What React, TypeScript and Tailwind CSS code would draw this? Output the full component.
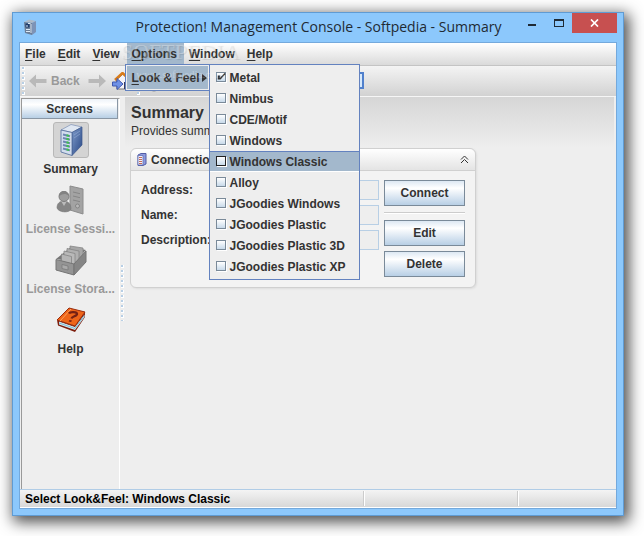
import * as React from "react";
import { useState } from "react";

// ─────────────────────────────────────────────
// Data
// ─────────────────────────────────────────────
const LOOKS = [
  "Metal",
  "Nimbus",
  "CDE/Motif",
  "Windows",
  "Windows Classic",
  "Alloy",
  "JGoodies Windows",
  "JGoodies Plastic",
  "JGoodies Plastic 3D",
  "JGoodies Plastic XP",
];

const FIELDS = ["Address:", "Name:", "Description:"];

// ─────────────────────────────────────────────
// Icons
// ─────────────────────────────────────────────
function TitleIcon() {
  return (
    <svg width="14" height="17" viewBox="0 0 14 17" aria-hidden="true">
      <path d="M1 3 6 0.5 13 2 9 4z" fill="#aebac8" />
      <path d="M1 3 9 4V16L2 14z" fill="#6c7f98" />
      <path d="M9 4 13 2V13L9 16z" fill="#7d93b6" />
      <path d="M2.5 4.500h4v4h-4z" fill="#1d3a6b" />
      <path d="M5 4.500h2.500M3 7h2M3 10.500h4M3 12.500h4M8 5v9" stroke="#dce8f5" strokeWidth="1" />
    </svg>
  );
}

function ServerIcon() {
  return (
    <svg width="26" height="34" viewBox="0 0 26 34" aria-hidden="true">
      <defs>
        <linearGradient id="side" x1="0" x2="1" y1="0" y2="1">
          <stop offset="0" stopColor="#7f9ccb" />
          <stop offset="1" stopColor="#284784" />
        </linearGradient>
      </defs>
      <path d="M3 7 13 1.500 24 4 14 9.500z" fill="#dfe7f2" stroke="#7b8fb4" strokeWidth=".7" />
      <path d="M14 9.500 24 4V22L14 32.500z" fill="url(#side)" stroke="#3a5489" strokeWidth=".7" />
      <path d="M3 7 14 9.500V32.500L3 29z" fill="#d3deee" stroke="#4f6999" strokeWidth=".8" />
      <path d="M5 11.500l7 1.700M5 15l7 1.700M5 18.500l7 1.700M5 22l7 1.700M5 25.500l7 1.900" stroke="#6d86b4" strokeWidth="2" />
      <path d="M8.500 12.300l2.500.6M8.500 15.800l2.500.6M8.500 19.300l2.500.6M8.500 22.800l2.500.6M8.500 26.400l2.500.6" stroke="#3fc04c" strokeWidth="2" />
      <path d="M16 12l6-4M16 15l6-4" stroke="#95add5" strokeWidth=".6" />
    </svg>
  );
}

function SessionsIcon() {
  return (
    <svg width="30" height="32" viewBox="0 0 30 32" aria-hidden="true">
      <path d="M14 2 27 5V30L14 26z" fill="#a3a3a3" stroke="#8c8c8c" />
      <path d="M17 8l7 1.700M17 12l7 1.700M17 16l7 1.700" stroke="#868686" />
      <circle cx="21.500" cy="22" r="2" fill="#b8b8b8" stroke="#858585" />
      <path d="M1 24c0-5 3-7 7-7s7 3 7 8c-1 4-12 4-14-1z" fill="#858585" stroke="#777" strokeWidth=".6" />
      <path d="M5 17l3 5 3-5z" fill="#bbb" />
      <circle cx="8" cy="12.500" r="5" fill="#9d9d9d" stroke="#7d7d7d" />
      <path d="M3 12c0-6 9-7 10 0-4-3-6-2-10 0z" fill="#828282" />
    </svg>
  );
}

function StorageIcon() {
  return (
    <svg width="34" height="32" viewBox="0 0 34 32" aria-hidden="true">
      <path d="M2 15 17 3 32 6 20 18z" fill="#777" />
      <path d="M16 2l13 2v13l-13-2z" fill="#a6a6a6" stroke="#858585" strokeWidth=".8" />
      <path d="M13 4.500l12 2.500v12l-12-3z" fill="#b0b0b0" stroke="#858585" strokeWidth=".8" />
      <path d="M10 7l11 2.500v12L10 18z" fill="#b9b9b9" stroke="#858585" strokeWidth=".8" />
      <path d="M7.500 10l10 2.500v10l-10-3z" fill="#b5b5b5" stroke="#858585" strokeWidth=".8" />
      <path d="M2 15.500 20 20V31L2 26z" fill="#949494" stroke="#757575" />
      <path d="M20 20 32 7V18L20 31z" fill="#858585" stroke="#757575" />
      <path d="M8 20.500l6 1.500v4l-6-1.500z" fill="#aaa" stroke="#777" strokeWidth=".7" />
    </svg>
  );
}

function HelpIcon() {
  return (
    <svg width="30" height="26" viewBox="0 0 30 26" aria-hidden="true">
      <path d="M1 13 19 19 29 5V10L19 25 2 18.500z" fill="#7d1d0c" />
      <path d="M3 14.500 19 20 28.500 7.500V10L19 23 3 17.500z" fill="#d3eaf3" />
      <path d="M3 16l16 5.500 9-12.500" fill="none" stroke="#69aeca" strokeWidth=".8" />
      <path d="M1 13 13 1 29 5 19 19z" fill="#ee651a" stroke="#9a2a0b" />
      <path d="M4 14 15 2" stroke="#ffa25c" />
      <path d="M13 6.500c1-2 8-2 8 .5s-5 2-5.500 4.500" fill="none" stroke="#762113" strokeWidth="2.300" />
      <path d="M13.500 13l2.500.6-.9 1.500-2.500-.6z" fill="#762113" />
    </svg>
  );
}

function SmallServerIcon() {
  return (
    <svg width="10" height="13" viewBox="0 0 10 13" aria-hidden="true">
      <path d="M1 2 4 .500h5V11L6 12.500H1z" fill="#8d9ade" stroke="#515ca5" />
      <path d="M1 2.500h5V12H1z" fill="#eef1fc" stroke="#6671b4" strokeWidth=".8" />
      <path d="M2 4.500h3M2 6.500h3M2 8.500h3M2 10.500h3" stroke="#c56a56" />
    </svg>
  );
}

function ArrowIcon({ forward }: { forward?: boolean }) {
  return (
    <svg width="18" height="14" viewBox="0 0 18 14" className={forward ? "rotate-180" : ""} aria-hidden="true">
      <path d="M0 7 7 .500V5H17.500V9H7V13.500z" fill="#b9b9b9" />
    </svg>
  );
}

function HomeIcon() {
  return (
    <svg width="18" height="18" viewBox="0 0 18 18" aria-hidden="true">
      <path d="M4.500 8 11 2l6 6v9H5z" fill="#f4f4f8" stroke="#777" />
      <path d="M3 8 10.500 1 18 8" fill="none" stroke="#d97b19" strokeWidth="2.500" />
      <path d="M12 10h3v7h-3z" fill="#3b3b5c" />
      <path d="M0.500 10H5V6.500l6 5.500-6 5.500V14H.500z" fill="#6f91e6" stroke="#3f58b0" />
    </svg>
  );
}

// ─────────────────────────────────────────────
// Small parts
// ─────────────────────────────────────────────
function Grip() {
  return (
    <span className="my-px w-[3px] self-stretch bg-[conic-gradient(from_0deg_at_2px_2px,transparent_75%,#b8cfe5_0),conic-gradient(from_0deg_at_3px_3px,transparent_75%,#fff_0)] bg-[length:3px_5px]" />
  );
}

function MenuTitle({ text, active }: { text: string; active?: boolean }) {
  return (
    <button className={`h-full pr-[7px] pl-[5px] ${active ? "bg-[#a3b8cc]" : ""}`}>
      <Mnemonic text={text} />
    </button>
  );
}

function Mnemonic({ text }: { text: string }) {
  return (
    <>
      <span className="underline underline-offset-2">{text[0]}</span>
      {text.slice(1)}
    </>
  );
}

function ScreenButton({ label, icon, active, disabled }: { label: string; icon: React.ReactNode; active?: boolean; disabled?: boolean }) {
  return (
    <button
      disabled={disabled}
      className={`flex h-[60px] w-full flex-col items-center gap-[3px] whitespace-nowrap ${disabled ? "text-[#999]" : ""}`}
    >
      <span
        className={`flex size-9 items-center justify-center rounded-[3px] border ${
          active ? "border-[#b8b8b8] bg-[#d4d4d4]" : "border-transparent"
        }`}
      >
        {icon}
      </span>
      <span className="leading-4">{label}</span>
    </button>
  );
}

function PanelButton({ children }: { children: React.ReactNode }) {
  return (
    <button className="h-[26px] w-full border border-[#7a8a99] bg-linear-to-b from-[#dde8f3] via-white via-30% to-[#b8cfe5]">
      {children}
    </button>
  );
}

// ─────────────────────────────────────────────
// Look & Feel menu
// ─────────────────────────────────────────────
function LookMenu() {
  const [checked, setChecked] = useState("Metal");
  const [hovered, setHovered] = useState("Windows Classic");

  return (
    <div className="absolute top-full -left-0.5 z-20 -mt-px w-[85px] border border-[#6382bf] bg-[#eee] p-px">
      <button className="flex h-[23px] w-full items-center justify-between bg-[#a3b8cc] pr-px pl-[5px] whitespace-nowrap">
        <span>
          <Mnemonic text="Look & Feel" />
        </span>
        <svg width="5" height="8" viewBox="0 0 5 8" aria-hidden="true">
          <path d="M0 0 5 4 0 8z" fill="#333" />
        </svg>
      </button>
      <div className="absolute -top-px left-[83px] w-[151px] border border-[#6382bf] bg-[#eee] py-0.5">
        {LOOKS.map((look) => (
          <label
            key={look}
            onMouseEnter={() => setHovered(look)}
            className={`flex h-[21px] items-center gap-1 border-y pl-1.5 whitespace-nowrap ${
              hovered === look ? "border-t-[#6382bf] border-b-white bg-[#a3b8cc]" : "border-transparent"
            }`}
          >
            <span className="relative -mt-0.5 flex">
              <input
                type="checkbox"
                checked={checked === look}
                onChange={() => setChecked(look)}
                className={`size-[10px] appearance-none border bg-linear-to-b from-white to-[#c8daea] shadow-[1px_1px_0_white] ${
                  hovered === look ? "border-[#222]" : "border-[#7a8a99]"
                }`}
              />
              {checked === look && (
                <svg width="9" height="9" viewBox="0 0 9 9" className="absolute top-0 left-px" aria-hidden="true">
                  <path d="M1.500 3.500v4M2.500 3.500v4M3 7 8 1.500" fill="none" stroke="#333" strokeWidth="1.500" />
                </svg>
              )}
            </span>
            <span>{look}</span>
          </label>
        ))}
      </div>
    </div>
  );
}

// ─────────────────────────────────────────────
// Window
// ─────────────────────────────────────────────
function TitleBar() {
  return (
    <header className="flex h-[29px] items-start">
      <span className="pt-1.5 pl-1">
        <TitleIcon />
      </span>
      <h1 className="min-w-0 flex-1 pt-1 pl-[82px] text-center font-['Open_Sans','Noto_Sans',sans-serif] text-[14px] leading-5 font-normal whitespace-nowrap text-[#1f2a33]">
        Protection! Management Console - Softpedia - Summary
      </h1>
      <div className="flex h-5 items-center">
        <button aria-label="Minimize" className="flex h-5 w-[27px] items-center justify-center">
          <span className="mt-1 h-0.5 w-2 bg-[#1e2a35]" />
        </button>
        <button aria-label="Maximize" className="flex h-5 w-[27px] items-center justify-center">
          <span className="h-2 w-2.5 border border-t-2 border-[#1e2a35]" />
        </button>
        <button aria-label="Close" className="flex h-5 w-[45px] items-center justify-center bg-[#c75050]">
          <svg width="9" height="8" viewBox="0 0 9 8" aria-hidden="true">
            <path d="M1 .5 8 7.500M8 .5 1 7.500" stroke="#fff" strokeWidth="1.700" />
          </svg>
        </button>
      </div>
    </header>
  );
}

function ConnectionPanel() {
  return (
    <section className="mx-[5px] w-[346px] rounded-md border border-[#d0d0d0] bg-[#f3f3f3] shadow-[1px_1px_2px_#ddd]">
      <div className="flex h-[22px] items-center gap-1 rounded-t-md border-b border-[#d0d0d0] bg-linear-to-b from-white to-[#e4e4e4] px-1.5">
        <SmallServerIcon />
        <h3 className="flex-1">Connection</h3>
        <button aria-label="Collapse">
          <svg width="9" height="9" viewBox="0 0 9 9" aria-hidden="true">
            <path d="M1 4.500 4.500 1 8 4.500M1 8 4.500 4.500 8 8" fill="none" stroke="#333" />
          </svg>
        </button>
      </div>
      <div className="flex gap-[5px] pt-[9px] pr-2.5 pb-2.5 pl-2.5">
        <div className="flex min-w-0 flex-1 flex-col gap-[5px]">
          {FIELDS.map((field) => (
            <label key={field} className="flex h-5 items-center gap-2">
              <span className="w-[70px] shrink-0">{field}</span>
              <input readOnly className="h-5 w-full min-w-0 border border-[#b8cfe5] bg-[#eee]" />
            </label>
          ))}
        </div>
        <div className="w-[81px] shrink-0">
          <PanelButton>Connect</PanelButton>
          <hr className="my-[6px] h-0.5 border-0 border-t border-b border-t-[#ccc] border-b-white" />
          <div className="flex flex-col gap-[5px]">
            <PanelButton>Edit</PanelButton>
            <PanelButton>Delete</PanelButton>
          </div>
        </div>
      </div>
    </section>
  );
}

export default function App() {
  return (
    <div className="flex min-h-screen bg-white pt-3 pr-5 pb-5 pl-3 font-['Liberation_Sans',Arial,sans-serif] text-[12px] leading-4 font-bold text-[#333]">
      <div className="flex min-w-0 flex-1 flex-col border border-[#5f9bd3] bg-[#8cc8fc] px-1.5 pb-1.5 shadow-[3px_4px_14px_2px_rgba(0,0,0,0.7)]">
        <TitleBar />

        <div className="flex flex-1 flex-col border border-[#74a9dc] bg-[#eee]">
          <nav className="relative flex h-[22px] bg-linear-to-b from-white to-[#dadada]">
            <MenuTitle text="File" />
            <MenuTitle text="Edit" />
            <MenuTitle text="View" />
            <div className="relative">
              <MenuTitle text="Options" active />
              <LookMenu />
            </div>
            <MenuTitle text="Window" />
            <MenuTitle text="Help" />
            <div className="pointer-events-none absolute -top-px left-[101px] z-30 text-center font-['Liberation_Serif',serif] font-normal text-white/30">
              <p className="text-[22px] leading-5 [text-shadow:1px_1px_1px_rgba(0,0,0,0.1)]">SOFTPEDIA</p>
              <p className="text-[11px] leading-6">www.softpedia.com</p>
            </div>
          </nav>

          <div className="flex h-8 items-center border-t border-b border-t-[#c4c4c4] border-b-[#f6f6f6] bg-linear-to-b from-[#f4f4f4] to-[#d2d2d2] px-0.5">
            <Grip />
            <button disabled className="flex items-center gap-1 pl-1 text-[#999]">
              <ArrowIcon />
              Back
            </button>
            <button disabled aria-label="Forward" className="pl-2">
              <ArrowIcon forward />
            </button>
            <button aria-label="Home" className="pl-1.5">
              <HomeIcon />
            </button>
            <span className="flex self-stretch pl-[7px]">
              <Grip />
            </span>
            <button aria-label="Stop" className="pt-0.5 pl-1">
              <svg width="20" height="20" viewBox="0 0 20 20" aria-hidden="true">
                <circle cx="10" cy="10" r="9" fill="#c53131" stroke="#888" />
              </svg>
            </button>
            <button aria-label="Help contents" className="pl-[184px]">
              <svg width="16" height="18" viewBox="0 0 16 18" aria-hidden="true">
                <path d="M1 1h14v15H1z" fill="#d5e8fb" stroke="#5080cc" strokeWidth="2" />
              </svg>
            </button>
          </div>

          <div className="flex flex-1">
            <aside className="mt-px ml-px w-[99px] border-t border-r border-l border-t-[#999] border-r-white border-l-[#999]">
              <h2 className="mr-px h-5 border-r border-b border-[#8a97a5] bg-linear-to-b from-[#eef3f9] via-white via-30% to-[#b8cfe5] text-center leading-5">
                Screens
              </h2>
              <div className="pt-[3px]">
                <ScreenButton label="Summary" icon={<ServerIcon />} active />
                <ScreenButton label="License Sessi..." icon={<SessionsIcon />} disabled />
                <ScreenButton label="License Stora..." icon={<StorageIcon />} disabled />
                <ScreenButton label="Help" icon={<HelpIcon />} />
              </div>
            </aside>
            <div className="flex w-[5px] flex-col justify-center px-px">
              <div className="flex h-[58px]">
                <Grip />
              </div>
            </div>
            <main className="mr-0.5 min-w-0 flex-1">
              <div className="h-[51px] bg-linear-to-b from-[#d6d6d6] to-[#eee] px-1.5 pt-1.5">
                <h2 className="text-[16px] leading-5">Summary</h2>
                <p className="font-normal">Provides summary information</p>
              </div>
              <ConnectionPanel />
            </main>
          </div>

          <footer className="flex h-[19px] items-center border-t border-b border-t-[#b0cce6] border-b-white bg-linear-to-b from-[#f4f4f4] to-[#d8d8d8] text-black">
            <p className="flex-1 pl-[5px]">Select Look&amp;Feel: Windows Classic</p>
            <span className="h-[15px] w-[154px] border-l border-[#ccc] shadow-[inset_1px_0_0_white]" />
            <span className="h-[15px] w-[99px] border-l border-[#ccc] shadow-[inset_1px_0_0_white]" />
          </footer>
        </div>
      </div>
    </div>
  );
}
